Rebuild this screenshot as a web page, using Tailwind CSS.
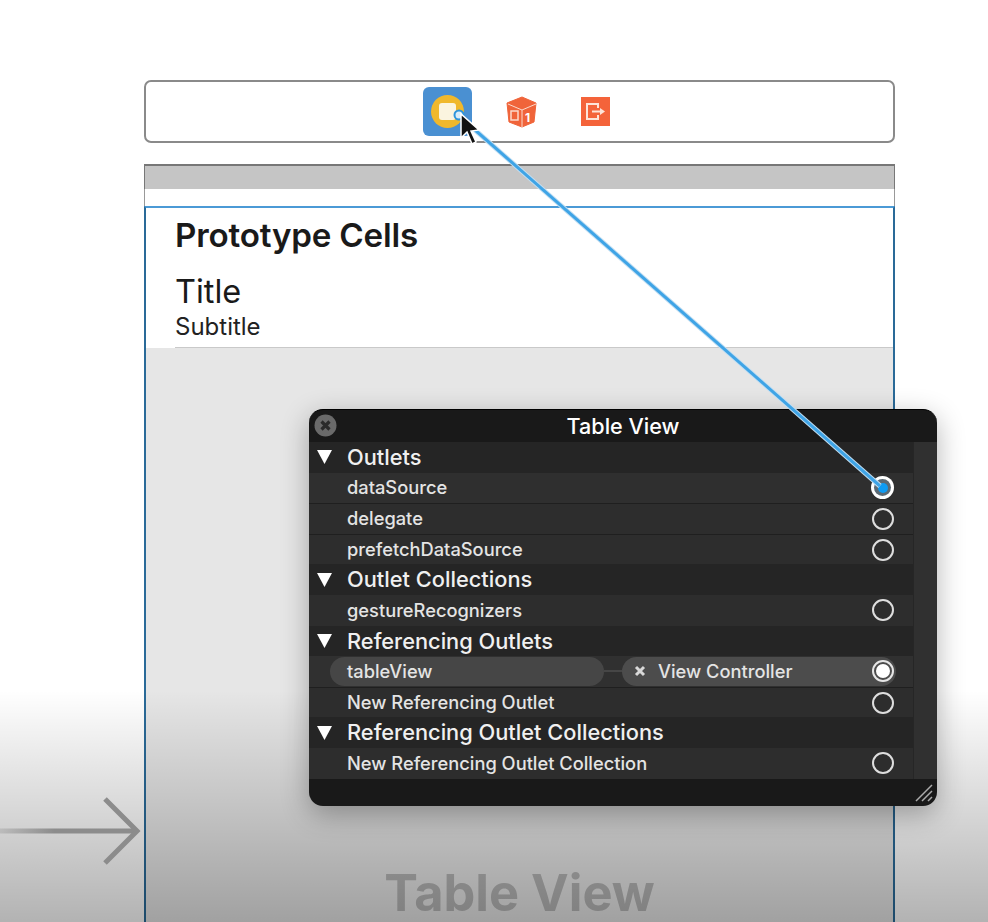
<!DOCTYPE html>
<html>
<head>
<meta charset="utf-8">
<script src="https://cdn.jsdelivr.net/npm/@tailwindcss/browser@4"></script>
</head>
<body class="bg-white">
<div class="relative w-[988px] h-[922px] overflow-hidden bg-white font-['Inter',sans-serif] pt-[80px] pl-[144px]">
  <!-- toolbar -->
  <div class="w-[751px] h-[63px] rounded-[7px] border-2 border-[#8a8a8a] bg-white flex items-center pl-[277px]">
    <div class="w-[49px] h-[49px] rounded-[6px] bg-[#4a90d2] flex items-center justify-center">
      <div class="w-[33px] h-[33px] rounded-full bg-[#f0b82c] flex items-center justify-center">
        <div class="w-[17px] h-[17px] rounded-[3px] bg-[#fbf4df]"></div>
      </div>
    </div>
    <svg class="ml-[34px]" width="32" height="32" viewBox="0 0 32 32">
      <path d="M16 1 L30 7 L28 26 L16 31 L3 26 L1 7 Z" fill="#f0643a" stroke="#f0643a" stroke-linejoin="round"/>
      <path d="M2 8 L16 14 L30 8 M16 14 V31" stroke="#fbd9cb" stroke-width="1" fill="none"/>
      <rect x="5" y="15" width="7" height="9" fill="none" stroke="#fbd9cb" stroke-width="1.5"/>
      <text x="19" y="26" font-size="12" font-weight="700" fill="#fff" font-family="Inter">1</text>
    </svg>
    <div class="ml-[43px] w-[29px] h-[29px] bg-[#f4633a] flex items-center justify-center">
      <svg width="21" height="17" viewBox="0 0 21 17" fill="none" stroke="#fde3d8" stroke-width="2">
        <path d="M13 5 V1 H2 V16 H13 V12"/>
        <path d="M7 8.5 H15" />
        <path d="M15 5 L20 8.5 L15 12 Z" fill="#fde3d8" stroke="none"/>
      </svg>
    </div>
  </div>

  <!-- scene -->
  <div class="mt-[21px] w-[751px] h-[760px] flex flex-col">
    <div class="h-[25px] bg-[#c5c5c5] border-t-2 border-x border-[#777]"></div>
    <div class="h-[17px] bg-white border-x border-[#999]"></div>
    <div class="flex-1 flex flex-col border-x-2 border-[#2a6a98] border-t-2 border-t-[#4b9ad6] bg-[#e6e6e6]">
      <div class="h-[141px] bg-white pl-[29px] border-b border-[#e6e6e6] flex flex-col">
        <div class="pt-[7px] text-[33.2px] leading-[40px] font-semibold text-[#1a1a1a] tracking-[-0.2px]">Prototype Cells</div>
        <div class="mt-[18px] text-[32.5px] leading-[38px] text-[#1a1a1a]">Title</div>
        <div class="mt-[3px] text-[24px] leading-[26px] text-[#222]">Subtitle</div>
        <div class="mt-auto h-px bg-[#c9c9c9]"></div>
      </div>
      <div class="flex-1 flex flex-col items-center">
        <div class="mt-[519px] text-[50.5px] leading-[50px] font-bold text-[#b5b5b5]">Table View</div>
      </div>
    </div>
  </div>

  <!-- video fade -->
  <div class="absolute left-0 right-0 top-[690px] bottom-0 bg-linear-to-b from-transparent to-black/30 pointer-events-none"></div>

  <!-- entry arrow -->
  <svg class="absolute left-0 top-[791px]" width="146" height="80" viewBox="0 0 146 80" fill="none" stroke="#8c8c8c" stroke-width="5">
    <defs>
      <linearGradient id="fade" x1="0" y1="0" x2="136" y2="0" gradientUnits="userSpaceOnUse">
        <stop offset="0" stop-color="#8c8c8c" stop-opacity="0.3"/>
        <stop offset="0.4" stop-color="#8c8c8c"/>
      </linearGradient>
    </defs>
    <rect x="0" y="37.5" width="136" height="5" fill="url(#fade)" stroke="none"/>
    <path d="M105 8 L137 40 L105 72"/>
  </svg>

  <!-- connections panel -->
  <div class="absolute left-[309px] top-[409px] w-[628px] h-[397px] rounded-[14px] overflow-hidden bg-[#191919] border-t border-black shadow-[0_8px_28px_rgba(0,0,0,0.3)] text-[#e4e4e4]">
    <div class="relative h-[32px] flex items-center justify-center text-[21.6px] font-medium text-white">
      <svg class="absolute left-[5px] top-[4px]" width="23" height="23" viewBox="0 0 23 23">
        <circle cx="11.5" cy="11.5" r="11" fill="#6a6a6a"/>
        <path d="M7.5 7.5 L15.5 15.5 M15.5 7.5 L7.5 15.5" stroke="#2a2a2a" stroke-width="3.2"/>
      </svg>
      Table View
    </div>
    <div class="flex h-[337px]">
      <div class="w-[604px] flex flex-col text-[18.3px]">
        <!-- Outlets -->
        <div class="h-[30.6px] bg-[#252525] flex items-center text-[21.8px] font-medium text-[#f0f0f0]">
          <svg class="ml-[8px] mr-[15px]" width="15" height="14" viewBox="0 0 15 14"><path d="M0 0 H15 L7.5 14 Z" fill="#fff"/></svg>Outlets
        </div>
        <div class="h-[30.6px] bg-[#2f2f2f] flex items-center justify-between pl-[38px] pr-[19px] font-medium">dataSource
          <div class="w-[23px] h-[23px] rounded-full bg-white flex items-center justify-center"><div class="w-[17px] h-[17px] rounded-full bg-[#5c6a74] flex items-center justify-center"><div class="w-[10px] h-[10px] rounded-full bg-[#0f9bf2]"></div></div></div>
        </div>
        <div class="h-[30.6px] bg-[#2d2d2d] border-t border-[#1f1f1f] flex items-center justify-between pl-[38px] pr-[19px] font-medium">delegate
          <div class="w-[22px] h-[22px] rounded-full border-2 border-[#dedede]"></div>
        </div>
        <div class="h-[30.6px] bg-[#2d2d2d] border-t border-[#1f1f1f] flex items-center justify-between pl-[38px] pr-[19px] font-medium">prefetchDataSource
          <div class="w-[22px] h-[22px] rounded-full border-2 border-[#dedede]"></div>
        </div>
        <!-- Outlet Collections -->
        <div class="h-[30.6px] bg-[#252525] flex items-center text-[21.8px] font-medium text-[#f0f0f0]">
          <svg class="ml-[8px] mr-[15px]" width="15" height="14" viewBox="0 0 15 14"><path d="M0 0 H15 L7.5 14 Z" fill="#fff"/></svg>Outlet Collections
        </div>
        <div class="h-[30.6px] bg-[#2d2d2d] flex items-center justify-between pl-[38px] pr-[19px] font-medium">gestureRecognizers
          <div class="w-[22px] h-[22px] rounded-full border-2 border-[#dedede]"></div>
        </div>
        <!-- Referencing Outlets -->
        <div class="h-[30.6px] bg-[#252525] flex items-center text-[21.8px] font-medium text-[#f0f0f0]">
          <svg class="ml-[8px] mr-[15px]" width="15" height="14" viewBox="0 0 15 14"><path d="M0 0 H15 L7.5 14 Z" fill="#fff"/></svg>Referencing Outlets
        </div>
        <div class="h-[30.6px] bg-[#303030] flex items-center pl-[21px] pr-[17px] font-medium">
          <div class="w-[274px] h-[29px] rounded-full bg-[#464646] pl-[17px] flex items-center">tableView</div>
          <div class="w-[18px] h-[2px] bg-[#464646]"></div>
          <div class="flex-1 h-[29px] rounded-full bg-[#4c4c4c] flex items-center pl-[12px] pr-[2px]">
            <svg width="12" height="12" viewBox="0 0 12 12"><path d="M2 2 L10 10 M10 2 L2 10" stroke="#d8d8d8" stroke-width="3"/></svg>
            <span class="ml-[12px]">View Controller</span>
            <div class="ml-auto w-[22px] h-[22px] rounded-full border-2 border-[#e6e6e6] flex items-center justify-center"><div class="w-[14px] h-[14px] rounded-full bg-white"></div></div>
          </div>
        </div>
        <div class="h-[30.6px] bg-[#2d2d2d] border-t border-[#1f1f1f] flex items-center justify-between pl-[38px] pr-[19px] font-medium">New Referencing Outlet
          <div class="w-[22px] h-[22px] rounded-full border-2 border-[#dedede]"></div>
        </div>
        <!-- Referencing Outlet Collections -->
        <div class="h-[30.6px] bg-[#252525] flex items-center text-[21.8px] font-medium text-[#f0f0f0]">
          <svg class="ml-[8px] mr-[15px]" width="15" height="14" viewBox="0 0 15 14"><path d="M0 0 H15 L7.5 14 Z" fill="#fff"/></svg>Referencing Outlet Collections
        </div>
        <div class="h-[30.6px] bg-[#2d2d2d] flex items-center justify-between pl-[38px] pr-[19px] font-medium">New Referencing Outlet Collection
          <div class="w-[22px] h-[22px] rounded-full border-2 border-[#dedede]"></div>
        </div>
      </div>
      <div class="flex-1 bg-[#303030] border-l border-[#262626]"></div>
    </div>
    <svg class="absolute right-[3px] bottom-[3px]" width="20" height="20" viewBox="0 0 20 20" stroke="#aaa" stroke-width="1.5">
      <path d="M2 18 L18 2 M8 18 L18 8 M14 18 L18 14"/>
    </svg>
  </div>

  <!-- drag line and cursor -->
  <svg class="absolute left-0 top-0 pointer-events-none" width="988" height="922" viewBox="0 0 988 922" fill="none">
    <path d="M458 115 L880 486" stroke="#c4dff2" stroke-width="5"/>
    <path d="M458 115 L880 486" stroke="#3fa4e6" stroke-width="3"/>
    <circle cx="459" cy="115" r="4.5" fill="#d9ecf9" stroke="#2e94dc" stroke-width="2"/>
    <path d="M461 114 V138 L467 132 L472 144 L476 142 L471 131 L479 130 Z" fill="#111" stroke="#fff" stroke-width="1.5"/>
  </svg>
</div>
</body>
</html>
